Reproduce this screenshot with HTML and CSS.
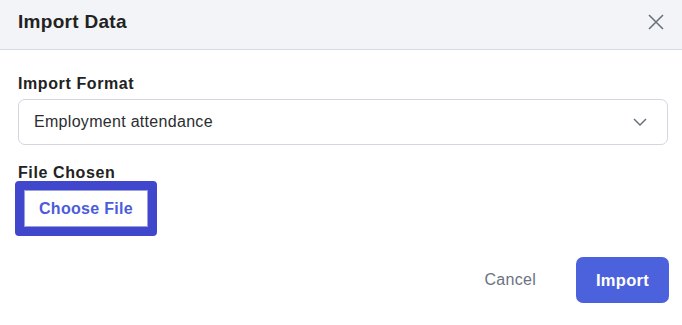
FILE: index.html
```html
<!DOCTYPE html>
<html lang="en">
<head>
  <meta charset="UTF-8" />
  <title>Import Data</title>
  <link rel="stylesheet" href="styles.css">
</head>
<body>
  <div class="modal">
    <div class="modal-header">
      <h3 class="modal-title">Import Data</h3>
      <button class="close-button" aria-label="Close">
        <svg width="16" height="16" viewBox="0 0 16 16"><path d="M1 1 L15 15 M15 1 L1 15" stroke="#6b7280" stroke-width="1.6" fill="none"/></svg>
      </button>
    </div>

    <div class="modal-body">
      <label class="field-label">Import Format</label>
      <div class="select-box">
        <span>Employment attendance</span>
        <svg width="14" height="8" viewBox="0 0 14 8"><path d="M1 1 L7 7 L13 1" stroke="#6b7280" stroke-width="1.5" fill="none"/></svg>
      </div>

      <label class="field-label file-label">File Chosen</label>
      <div class="file-focus">
        <button class="choose-button">Choose File</button>
      </div>
    </div>

    <div class="modal-footer">
      <button class="cancel-button">Cancel</button>
      <button class="import-button">Import</button>
    </div>
  </div>
</body>
</html>
```

FILE: styles.css
```css
body {
  font-family: "Liberation Sans", Arial, sans-serif;
  margin: 0;
  background-color: white;
  color: #1f2124;
}
.modal {
  width: 682px;
  height: 325px;
  background: white;
}
.modal-header {
  height: 50px;
  background: #f3f4f7;
  border-bottom: 1px solid #d5d9e2;
  box-sizing: border-box;
  display: flex;
  align-items: center;
  justify-content: space-between;
  padding: 0 18px 6px 18px;
}
.modal-title {
  margin: 0;
  font-size: 19px;
  letter-spacing: 0.3px;
  font-weight: bold;
  color: #222;
}
.close-button {
  background: none;
  border: none;
  padding: 0;
  display: flex;
  cursor: pointer;
}
.modal-body {
  padding: 25px 14px 0 18px;
}
.field-label {
  display: block;
  font-size: 16px;
  letter-spacing: 0.6px;
  font-weight: bold;
  color: #222;
  margin-bottom: 6px;
}
.file-label {
  margin-top: 19px;
  margin-bottom: -1px;
}
.select-box {
  height: 46px;
  box-sizing: border-box;
  border: 1px solid #d3d6de;
  border-radius: 7px;
  display: flex;
  align-items: center;
  justify-content: space-between;
  padding: 0 20px 0 15px;
  font-size: 16px;
  letter-spacing: 0.3px;
  color: #2b2d31;
}
.file-focus {
  display: inline-block;
  margin-left: -3px;
  border: 9px solid #4147cc;
  border-radius: 4px;
}
.choose-button {
  display: block;
  background: white;
  border: 1px solid #9aa0dd;
  color: #4b5cdb;
  font-family: inherit;
  font-size: 16px;
  letter-spacing: 0.3px;
  font-weight: bold;
  padding: 0;
  height: 37px;
  width: 124px;
}
.modal-footer {
  display: flex;
  justify-content: flex-end;
  align-items: center;
  gap: 40px;
  padding: 21px 13px 0 0;
}
.cancel-button {
  background: none;
  border: none;
  color: #6b7280;
  font-family: inherit;
  font-size: 16px;
  letter-spacing: 0.3px;
  padding: 0;
}
.import-button {
  background: #4c62dc;
  color: white;
  border: none;
  border-radius: 7px;
  width: 93px;
  height: 46px;
  font-family: inherit;
  font-size: 16.5px;
  letter-spacing: 0.3px;
  font-weight: bold;
}
```
